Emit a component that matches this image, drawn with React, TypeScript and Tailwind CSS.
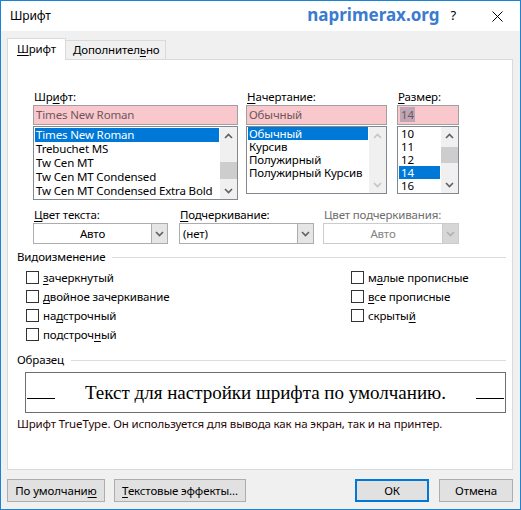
import React from "react";

function Chev({ dir, color }: { dir: "up" | "down"; color: string }) {
  return (
    <svg width="9" height="6" viewBox="0 0 9 6">
      <path
        d={dir === "up" ? "M1 5 L4.5 1.5 L8 5" : "M1 1 L4.5 4.5 L8 1"}
        fill="none"
        stroke={color}
        strokeWidth="1.6"
      />
    </svg>
  );
}

function Scrollbar({ thumb, disabled }: { thumb?: string; disabled?: boolean }) {
  const c = disabled ? "#c4c4c4" : "#606060";
  return (
    <div className="w-[17px] shrink-0 flex flex-col bg-[#f0f0f0]">
      <div className="h-[17px] flex items-center justify-center">
        <Chev dir="up" color={c} />
      </div>
      <div className="flex-1">{thumb ? <div className={"bg-[#cdcdcd] " + thumb} /> : null}</div>
      <div className="h-[17px] flex items-center justify-center">
        <Chev dir="down" color={c} />
      </div>
    </div>
  );
}

function U({ children }: { children: React.ReactNode }) {
  return <span className="underline decoration-1 underline-offset-[2px]">{children}</span>;
}

function Label({ children, gray }: { children: React.ReactNode; gray?: boolean }) {
  return (
    <div className={"h-[16px] leading-[16px] pl-[1px] " + (gray ? "text-[#6d6d6d]" : "text-black")}>
      {children}
    </div>
  );
}

function PinkInput({ children }: { children: React.ReactNode }) {
  return (
    <div className="h-[20px] border border-[#a0a0a0] bg-[#f8c8cc] pl-[2px] leading-[18px] text-[#6e5659]">
      {children}
    </div>
  );
}

function Select({
  text,
  center,
  disabled,
}: {
  text: string;
  center?: boolean;
  disabled?: boolean;
}) {
  return (
    <div
      className={
        "h-[21px] flex border bg-white " + (disabled ? "border-[#cccccc]" : "border-[#adadad]")
      }
    >
      <div
        className={
          "flex-1 leading-[19px] " +
          (center ? "text-center " : "pl-[3px] ") +
          (disabled ? "text-[#838383]" : "text-black")
        }
      >
        {text}
      </div>
      <div
        className={
          "w-[16px] flex items-center justify-center border-l " +
          (disabled ? "bg-[#d6d6d6] border-[#cccccc]" : "bg-[#e5e5e5] border-[#adadad]")
        }
      >
        <Chev dir="down" color={disabled ? "#b0b0b0" : "#606060"} />
      </div>
    </div>
  );
}

function Check({ children }: { children: React.ReactNode }) {
  return (
    <div className="h-[19px] flex items-center">
      <div className="w-[13px] h-[13px] border border-[#333333] bg-white shrink-0" />
      <div className="ml-[4px] leading-[16px]">{children}</div>
    </div>
  );
}

function Heading({ children }: { children: React.ReactNode }) {
  return (
    <div className="h-[16px] flex items-center pl-[9px] pr-[6px]">
      <span className="leading-[16px]">{children}</span>
      <div className="flex-1 h-[1px] bg-[#dcdcdc] ml-[7px]" />
    </div>
  );
}

function Btn({
  children,
  w,
  primary,
}: {
  children: React.ReactNode;
  w: string;
  primary?: boolean;
}) {
  return (
    <div
      className={
        "h-[23px] flex items-center justify-center bg-[#e1e1e1] " +
        w +
        (primary ? " border-2 border-[#0078d7]" : " border border-[#adadad]")
      }
    >
      {children}
    </div>
  );
}

export default function App() {
  const fonts = [
    "Times New Roman",
    "Trebuchet MS",
    "Tw Cen MT",
    "Tw Cen MT Condensed",
    "Tw Cen MT Condensed Extra Bold",
  ];
  const styles = ["Обычный", "Курсив", "Полужирный", "Полужирный Курсив"];
  const sizes = ["10", "11", "12", "14", "16"];

  return (
    <div className="w-[521px] h-[510px] border border-[#1883d7] bg-[#f0f0f0] flex flex-col font-['Noto_Sans',sans-serif] text-[11.5px] tracking-[-0.15px] text-black overflow-hidden">
      {/* Title bar */}
      <div className="h-[30px] bg-white flex items-center shrink-0">
        <div className="pl-[9px] text-[12px]">Шрифт</div>
        <div className="ml-auto text-[17px] tracking-normal font-bold text-[#3a7bd0] leading-[20px] mb-[2px]">
          naprimerax.org
        </div>
        <div className="ml-[11px] text-[13px] leading-[16px] mb-[2px]">?</div>
        <div className="ml-[36px] mr-[17px]">
          <svg width="11" height="11" viewBox="0 0 11 11">
            <path d="M0.5 0.5 L10.5 10.5 M10.5 0.5 L0.5 10.5" stroke="#000" strokeWidth="1" />
          </svg>
        </div>
      </div>

      {/* Body */}
      <div className="flex flex-col pl-[6px] pt-[7px]">
        {/* Tabs */}
        <div className="flex items-end h-[21px]">
          <div className="relative z-10 w-[59px] h-[22px] mb-[-1px] bg-white border border-b-0 border-[#d9d9d9] flex items-center pl-[9px] pb-[1px]">
            <span>
              <U>Ш</U>рифт
            </span>
          </div>
          <div className="w-[101px] ml-[-1px] h-[19px] bg-[#f0f0f0] border border-b-0 border-[#d9d9d9] flex items-center pl-[7px]">
            <span>
              Дополнител<U>ь</U>но
            </span>
          </div>
        </div>

        {/* Panel */}
        <div className="w-[506px] h-[411px] bg-white border border-[#d9d9d9] flex flex-col">
          {/* Row 1 */}
          <div className="flex pl-[25px] pt-[29px]">
            <div className="w-[205px]">
              <Label>
                Шр<U>и</U>фт:
              </Label>
              <PinkInput>Times New Roman</PinkInput>
              <div className="mt-[1px] h-[74px] border border-[#828790] bg-white flex">
                <div className="flex-1 pt-[1px] pl-[1px] pr-[1px] overflow-hidden">
                  {fonts.map((f, i) => (
                    <div
                      key={f}
                      className={
                        "h-[14px] leading-[14px] pl-[1px] whitespace-nowrap " +
                        (i === 0 ? "bg-[#0078d7] text-white" : "")
                      }
                    >
                      {f}
                    </div>
                  ))}
                </div>
                <Scrollbar thumb="mt-[18px] h-[17px]" />
              </div>
            </div>
            <div className="w-[141px] ml-[8px]">
              <Label>
                <U>Н</U>ачертание:
              </Label>
              <PinkInput>Обычный</PinkInput>
              <div className="mt-[1px] h-[68px] border border-[#828790] bg-white flex">
                <div className="flex-1 pl-[1px] pr-[1px] overflow-hidden">
                  {styles.map((f, i) => (
                    <div
                      key={f}
                      className={
                        "h-[13px] leading-[13px] pl-[1px] whitespace-nowrap " +
                        (i === 0 ? "bg-[#0078d7] text-white" : "")
                      }
                    >
                      {f}
                    </div>
                  ))}
                </div>
                <Scrollbar disabled />
              </div>
            </div>
            <div className="w-[62px] ml-[10px]">
              <Label>
                <U>Р</U>азмер:
              </Label>
              <PinkInput>
                <span className="bg-[#bea6b6] px-[1px]">14</span>
              </PinkInput>
              <div className="mt-[1px] h-[68px] border border-[#828790] bg-white flex">
                <div className="flex-1 pl-[1px] pr-[1px]">
                  {sizes.map((f, i) => (
                    <div
                      key={f}
                      className={
                        "h-[13px] leading-[13px] pl-[2px] " +
                        (i === 3 ? "bg-[#0078d7] text-white" : "")
                      }
                    >
                      {f}
                    </div>
                  ))}
                </div>
                <Scrollbar thumb="mt-[3px] h-[16px]" />
              </div>
            </div>
          </div>

          {/* Row 2 */}
          <div className="flex pl-[25px] mt-[7px]">
            <div className="w-[135px]">
              <Label>
                <U>Ц</U>вет текста:
              </Label>
              <Select text="Авто" center />
            </div>
            <div className="w-[135px] ml-[11px]">
              <Label>
                <U>П</U>одчеркивание:
              </Label>
              <Select text="(нет)" />
            </div>
            <div className="w-[136px] ml-[9px]">
              <Label gray>Цвет подчеркивания:</Label>
              <Select text="Авто" center disabled />
            </div>
          </div>

          {/* Видоизменение */}
          <div className="mt-[5px]">
            <Heading>Видоизменение</Heading>
          </div>
          <div className="flex mt-[3px]">
            <div className="flex flex-col pl-[18px] w-[343px]">
              <Check>
                <U>з</U>ачеркнутый
              </Check>
              <Check>
                <U>д</U>войное зачеркивание
              </Check>
              <Check>
                на<U>д</U>строчный
              </Check>
              <Check>
                подстроч<U>н</U>ый
              </Check>
            </div>
            <div className="flex flex-col">
              <Check>
                м<U>а</U>лые прописные
              </Check>
              <Check>
                <U>в</U>се прописные
              </Check>
              <Check>
                скрыты<U>й</U>
              </Check>
            </div>
          </div>

          {/* Образец */}
          <div className="mt-[8px]">
            <Heading>Образец</Heading>
          </div>
          <div className="ml-[17px] mt-[4px] w-[481px] h-[41px] border border-[#6d6d6d] flex px-[1px]">
            <div className="w-[28px] h-[1px] bg-black self-end mb-[13px]" />
            <div className="flex-1 flex items-center justify-center font-['Liberation_Serif',serif] tracking-normal text-[19px] leading-[22px] pt-[1px]">
              Текст для настройки шрифта по умолчанию.
            </div>
            <div className="w-[28px] h-[1px] bg-black self-end mb-[13px]" />
          </div>
          <div className="ml-[9px] mt-[3px] leading-[16px] text-[#2a0808]">
            Шрифт TrueType. Он используется для вывода как на экран, так и на принтер.
          </div>
        </div>

        {/* Buttons */}
        <div className="flex mt-[9px]">
          <Btn w="w-[98px]">
            По умолчани<U>ю</U>
          </Btn>
          <div className="ml-[9px]">
            <Btn w="w-[132px]">
              <span>
                <U>Т</U>екстовые эффекты...
              </span>
            </Btn>
          </div>
          <div className="ml-[109px]">
            <Btn w="w-[74px]" primary>
              ОК
            </Btn>
          </div>
          <div className="ml-[10px]">
            <Btn w="w-[74px]">Отмена</Btn>
          </div>
        </div>
      </div>
    </div>
  );
}
